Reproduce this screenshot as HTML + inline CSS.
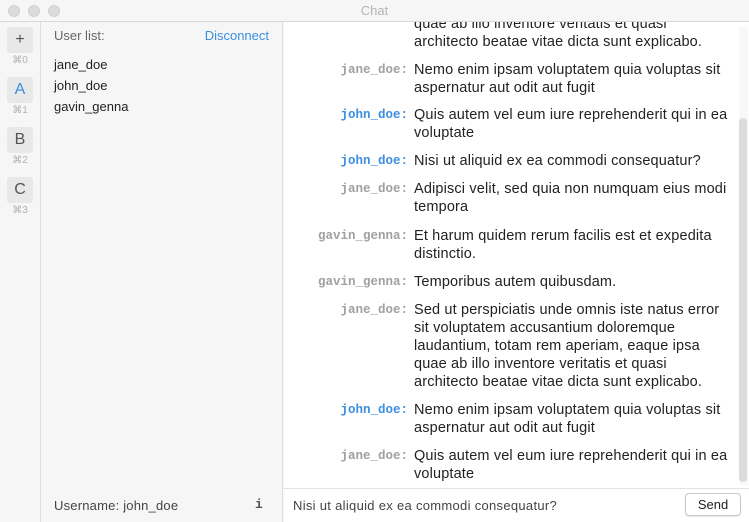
<!DOCTYPE html>
<html><head><meta charset="utf-8"><style>
*{margin:0;padding:0;box-sizing:border-box}
body{width:749px;height:522px;overflow:hidden;background:#f6f6f6;font-family:"Liberation Sans",sans-serif;color:#222;position:relative}
.tb{position:absolute;left:0;top:0;width:749px;height:22px;background:#f6f6f6;border-bottom:1px solid #d8d8d8;z-index:5}
.dot{position:absolute;top:5px;width:12px;height:12px;border-radius:50%;background:#dcdcdc;border:1px solid #d0d0d0}
.title{position:absolute;left:0;right:0;top:3px;text-align:center;font-size:13px;color:#b5b5b5}
.side{position:absolute;left:0;top:22px;width:41px;height:500px;background:#f6f6f6;border-right:1px solid #dedede}
.btn{position:absolute;left:7px;width:26px;height:26px;background:#e8e8e8;border-radius:3px;text-align:center;font-size:16px;line-height:26px;color:#555}
.key{position:absolute;left:0;width:40px;text-align:center;font-size:10px;color:#b0b0b0}
.users{position:absolute;left:42px;top:22px;width:241px;height:500px;background:#f6f6f6;border-right:1px solid #dedede;font-size:13px}
.chat{position:absolute;left:284px;top:22px;width:465px;height:466px;background:#fff;overflow:hidden}
.l{position:absolute;height:18px;line-height:18px;font-size:14.5px;white-space:nowrap}
.t{left:130px;color:#222;letter-spacing:.15px}
.n{right:341px;font-family:"Liberation Mono",monospace;font-weight:bold;font-size:12.5px;color:#a0a0a0}
.n.b{color:#3b8ee0}
.track{position:absolute;left:455px;top:5px;width:9px;height:458px;background:#f8f8f8}
.thumb{position:absolute;left:455px;top:96px;width:8px;height:364px;background:#dcdcdc;border-radius:4px}
.input{position:absolute;left:284px;top:488px;width:465px;height:34px;background:#fff;border-top:1px solid #e2e2e2;font-size:13px}
</style></head><body>
<div class="tb"><div class="dot" style="left:8px"></div><div class="dot" style="left:28px"></div><div class="dot" style="left:48px"></div><div class="title">Chat</div></div>
<div class="side">
<div class="btn" style="top:5px">+</div><div class="key" style="top:33px">⌘0</div>
<div class="btn" style="top:55px;color:#3b8ee0">A</div><div class="key" style="top:83px">⌘1</div>
<div class="btn" style="top:105px">B</div><div class="key" style="top:133px">⌘2</div>
<div class="btn" style="top:155px">C</div><div class="key" style="top:183px">⌘3</div>
</div>
<div class="users">
<div style="position:absolute;left:12px;top:6px;color:#666">User list:</div>
<div style="position:absolute;right:13px;top:6px;color:#3b8ee0">Disconnect</div>
<div style="position:absolute;left:12px;top:32px;line-height:21px;color:#222">jane_doe<br>john_doe<br>gavin_genna</div>
<div style="position:absolute;left:12px;top:476px;color:#444;letter-spacing:.2px">Username: john_doe</div>
<div style="position:absolute;left:213px;top:475px;color:#555;font-family:'Liberation Mono',monospace;font-weight:bold">i</div>
</div>
<div class="chat">
<div class="l t" style="top:-7px">quae ab illo inventore veritatis et quasi</div>
<div class="l t" style="top:11px">architecto beatae vitae dicta sunt explicabo.</div>
<div class="l n" style="top:39px">jane_doe:</div><div class="l t" style="top:39px">Nemo enim ipsam voluptatem quia voluptas sit</div><div class="l t" style="top:57px">aspernatur aut odit aut fugit</div>
<div class="l n b" style="top:84px">john_doe:</div><div class="l t" style="top:84px">Quis autem vel eum iure reprehenderit qui in ea</div><div class="l t" style="top:102px">voluptate</div>
<div class="l n b" style="top:130px">john_doe:</div><div class="l t" style="top:130px">Nisi ut aliquid ex ea commodi consequatur?</div>
<div class="l n" style="top:158px">jane_doe:</div><div class="l t" style="top:158px">Adipisci velit, sed quia non numquam eius modi</div><div class="l t" style="top:176px">tempora</div>
<div class="l n" style="top:205px">gavin_genna:</div><div class="l t" style="top:205px">Et harum quidem rerum facilis est et expedita</div><div class="l t" style="top:223px">distinctio.</div>
<div class="l n" style="top:251px">gavin_genna:</div><div class="l t" style="top:251px">Temporibus autem quibusdam.</div>
<div class="l n" style="top:279px">jane_doe:</div><div class="l t" style="top:279px">Sed ut perspiciatis unde omnis iste natus error</div><div class="l t" style="top:297px">sit voluptatem accusantium doloremque</div><div class="l t" style="top:315px">laudantium, totam rem aperiam, eaque ipsa</div><div class="l t" style="top:333px">quae ab illo inventore veritatis et quasi</div><div class="l t" style="top:351px">architecto beatae vitae dicta sunt explicabo.</div>
<div class="l n b" style="top:379px">john_doe:</div><div class="l t" style="top:379px">Nemo enim ipsam voluptatem quia voluptas sit</div><div class="l t" style="top:397px">aspernatur aut odit aut fugit</div>
<div class="l n" style="top:425px">jane_doe:</div><div class="l t" style="top:425px">Quis autem vel eum iure reprehenderit qui in ea</div><div class="l t" style="top:443px">voluptate</div>
<div class="track"></div><div class="thumb"></div>
</div>
<div class="input">
<div style="position:absolute;left:9px;top:9px;color:#444;letter-spacing:.3px">Nisi ut aliquid ex ea commodi consequatur?</div>
<div style="position:absolute;left:401px;top:4px;width:56px;height:23px;border:1px solid #c8c8c8;border-radius:4px;background:#fff;text-align:center;line-height:21px;color:#222;box-shadow:0 1px 1px rgba(0,0,0,.08)">Send</div>
</div>
</body></html>
